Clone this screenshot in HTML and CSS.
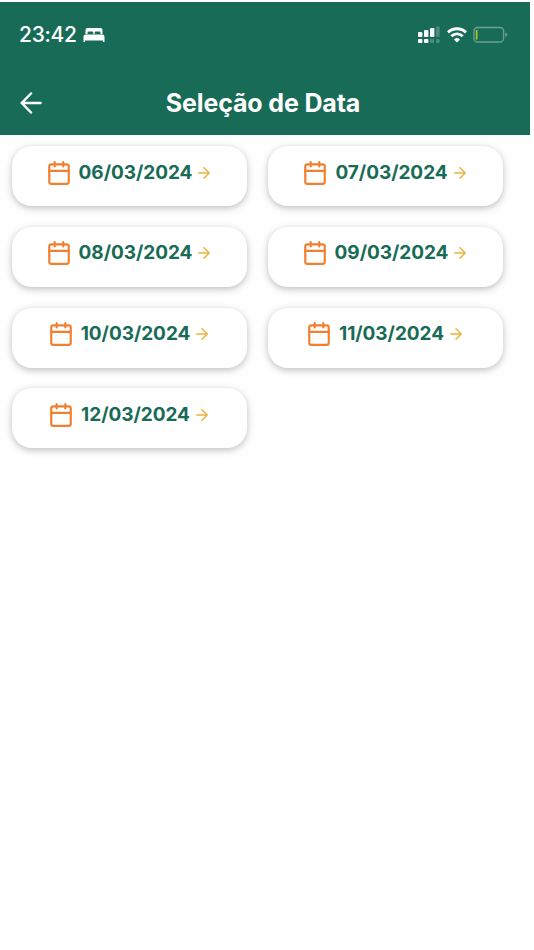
FILE: index.html
```html
<!DOCTYPE html>
<html lang="pt-BR">
<head>
    <meta charset="UTF-8">
    <meta name="viewport" content="width=device-width, initial-scale=1.0">
    <title>Seleção de Data</title>
    <link rel="stylesheet" href="styles.css">
</head>
<body>
    <svg class="sprite" width="0" height="0">
        <symbol id="calendar" viewBox="0 0 24 24">
            <rect x="3" y="4" width="18" height="18" rx="2"/>
            <path d="M8 2v4M16 2v4M3 10h18"/>
        </symbol>
        <symbol id="arrow" viewBox="0 0 24 24">
            <path d="M5 12h14M12 5l7 7-7 7"/>
        </symbol>
    </svg>

    <header class="header">
        <div class="status-bar">
            <span class="time">23:42</span>
            <svg class="bed" width="22" height="16" viewBox="0 0 22 16">
                <path d="M2.5 7V3Q2.5 1 4.5 1h13Q19.5 1 19.5 3v4h-2V5.8Q17.5 4.6 16.3 4.6h-3.6Q11.7 4.6 11.7 5.8V7h-1.4V5.8Q10.3 4.6 9.3 4.6H5.7Q4.5 4.6 4.5 5.8V7z"/>
                <path d="M.5 15V9.7Q.5 7.6 2.6 7.6h16.8Q21.5 7.6 21.5 9.7V15h-1.6v-1.4H2.1V15z"/>
            </svg>
            <div class="indicators">
                <svg class="signal" width="22" height="18" viewBox="0 0 22 18">
                    <g class="on">
                        <rect x="0" y="6" width="4.4" height="5" rx="1"/>
                        <rect x="6" y="4" width="4.4" height="7" rx="1"/>
                        <rect x="12" y="2" width="4.4" height="9" rx="1"/>
                        <rect x="0" y="13" width="4.4" height="4" rx="1"/>
                        <rect x="6" y="13" width="4.4" height="4" rx="1"/>
                    </g>
                    <g class="off">
                        <rect x="18" y="0.5" width="3.6" height="10.5" rx="1"/>
                        <rect x="12" y="13" width="4" height="4" rx="1"/>
                        <rect x="18" y="13" width="3.6" height="4" rx="1"/>
                    </g>
                </svg>
                <svg class="wifi" width="20" height="16" viewBox="0 0 20 16">
                    <path d="M1 5.4a13 13 0 0 1 18 0M4.3 9.2a8.2 8.2 0 0 1 11.4 0"/>
                    <path class="dot" d="M10 15.6l-3-3.1a4.3 4.3 0 0 1 6 0z"/>
                </svg>
                <svg class="battery" width="35" height="18" viewBox="0 0 35 18">
                    <rect class="case" x="1" y="1.5" width="29.6" height="14.5" rx="3.5"/>
                    <rect class="charge" x="2.8" y="4" width="1.7" height="9.5"/>
                    <path class="tip" d="M32.3 6.6q2 .4 2 2.1t-2 2.1z"/>
                </svg>
            </div>
        </div>
        <div class="nav">
            <svg class="back" width="22" height="22" viewBox="0 0 22 22">
                <path d="M11 1.5L1.7 11l9.3 9.5M1.7 11H20.5"/>
            </svg>
            <h1 class="title">Seleção de Data</h1>
        </div>
    </header>

    <main class="dates">
        <div class="card">
            <svg class="calendar"><use href="#calendar"/></svg>
            <span class="date">06/03/2024</span>
            <svg class="arrow"><use href="#arrow"/></svg>
        </div>
        <div class="card">
            <svg class="calendar"><use href="#calendar"/></svg>
            <span class="date">07/03/2024</span>
            <svg class="arrow"><use href="#arrow"/></svg>
        </div>
        <div class="card">
            <svg class="calendar"><use href="#calendar"/></svg>
            <span class="date">08/03/2024</span>
            <svg class="arrow"><use href="#arrow"/></svg>
        </div>
        <div class="card">
            <svg class="calendar"><use href="#calendar"/></svg>
            <span class="date">09/03/2024</span>
            <svg class="arrow"><use href="#arrow"/></svg>
        </div>
        <div class="card">
            <svg class="calendar"><use href="#calendar"/></svg>
            <span class="date">10/03/2024</span>
            <svg class="arrow"><use href="#arrow"/></svg>
        </div>
        <div class="card">
            <svg class="calendar"><use href="#calendar"/></svg>
            <span class="date">11/03/2024</span>
            <svg class="arrow"><use href="#arrow"/></svg>
        </div>
        <div class="card">
            <svg class="calendar"><use href="#calendar"/></svg>
            <span class="date">12/03/2024</span>
            <svg class="arrow"><use href="#arrow"/></svg>
        </div>
    </main>
</body>
</html>
```

FILE: styles.css
```css
:root {
    --primary-color: #186b56;
    --icon-color: #f08030;
    --arrow-color: #edb33f;
}
* {
    box-sizing: border-box;
}
body {
    margin: 0;
    padding-top: 2px;
    width: 530px;
    background: #fefefe;
    font-family: Inter, "Liberation Sans", sans-serif;
}
svg {
    display: block;
    flex-shrink: 0;
    fill: none;
    stroke-linecap: round;
    stroke-linejoin: round;
}
.sprite {
    position: absolute;
}

/* Header */
.header {
    height: 133px;
    background: var(--primary-color);
    color: #fff;
}
.status-bar {
    display: flex;
    align-items: center;
    height: 65px;
    padding: 0 22px 0 19px;
}
.time {
    font-size: 21px;
    font-weight: 500;
    line-height: 24px;
    letter-spacing: -0.3px;
}
.bed {
    margin-left: 6px;
    fill: #fff;
}
.indicators {
    display: flex;
    align-items: center;
    gap: 7px;
    margin-left: auto;
}
.on {
    fill: #fff;
}
.off {
    fill: #4b8d7c;
}
.wifi {
    stroke: #fff;
    stroke-width: 2.9;
    stroke-linecap: butt;
}
.dot {
    fill: #fff;
    stroke: none;
}
.battery {
    margin-left: -1px;
}
.case {
    stroke: #69a293;
    stroke-width: 1.3;
}
.charge {
    fill: #b5c327;
}
.tip {
    fill: #69a293;
}
.nav {
    display: grid;
    grid-template-columns: 22px 1fr 22px;
    align-items: center;
    height: 72px;
    padding: 0 24px 0 20px;
}
.back {
    stroke: #fff;
    stroke-width: 2.5;
}
.title {
    margin: 0;
    font-size: 25px;
    font-weight: 700;
    line-height: 30px;
    letter-spacing: -0.15px;
    text-align: center;
}

/* Date cards */
.dates {
    display: grid;
    grid-template-columns: 235px 235px;
    column-gap: 21px;
    row-gap: 20.8px;
    padding: 11px 12px;
}
.card {
    display: flex;
    align-items: center;
    justify-content: center;
    height: 60px;
    padding-bottom: 7px;
    border-radius: 20px;
    background: #fff;
    box-shadow: 0 2px 7px rgba(0,0,0,0.26);
}
.calendar {
    width: 26px;
    height: 26px;
    margin-right: 7px;
    stroke: var(--icon-color);
    stroke-width: 2;
}
.date {
    color: var(--primary-color);
    font-size: 19px;
    font-weight: 700;
    line-height: 24px;
    letter-spacing: -0.05px;
}
.arrow {
    width: 18px;
    height: 18px;
    margin-left: 3px;
    stroke: var(--arrow-color);
    stroke-width: 2;
}
```
